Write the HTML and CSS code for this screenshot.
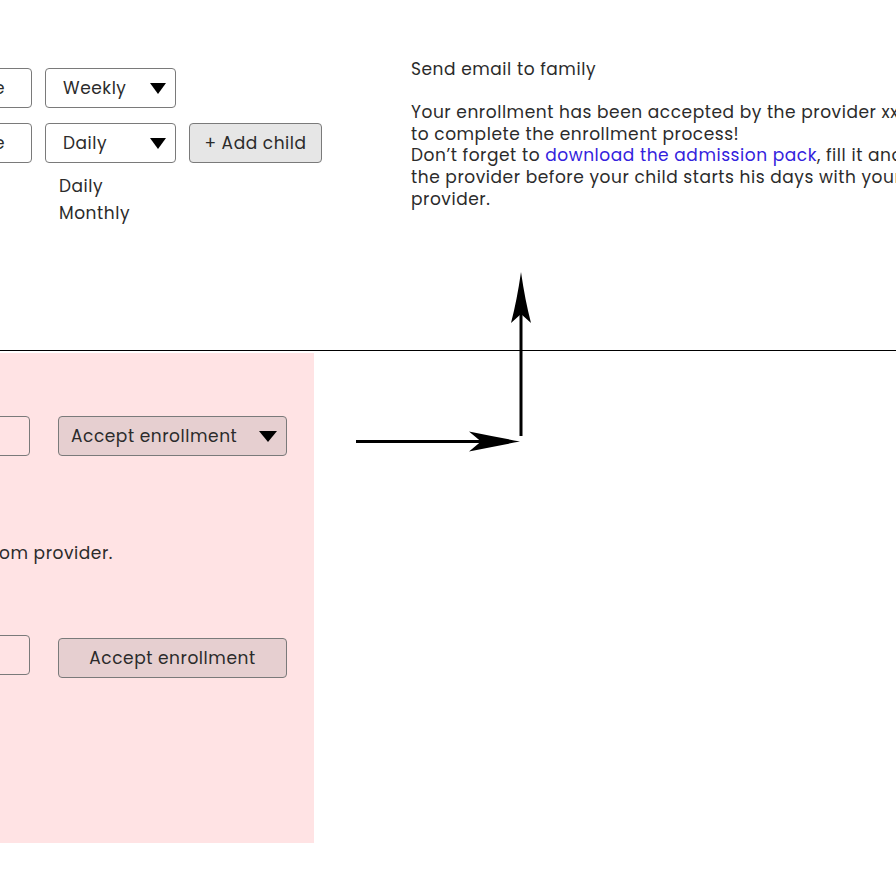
FILE: index.html
```html
<!DOCTYPE html>
<html lang="en">
<head>
<meta charset="utf-8">
<title>Enrollment flow</title>
<link rel="stylesheet" href="styles.css">
</head>
<body>
<div class="page">
  <section class="top">
    <div class="form">
      <div class="row">
        <div class="field input"><span>Name</span></div>
        <div class="field select"><span>Weekly</span><svg class="caret" viewBox="0 0 16 11"><polygon points="0,0 16,0 8,11"/></svg></div>
      </div>
      <div class="row">
        <div class="field input"><span>Name</span></div>
        <div class="select-wrap">
          <div class="field select"><span>Daily</span><svg class="caret" viewBox="0 0 16 11"><polygon points="0,0 16,0 8,11"/></svg></div>
          <ul class="options">
            <li>Daily</li>
            <li>Monthly</li>
          </ul>
        </div>
        <div class="field button">+ Add child</div>
      </div>
    </div>
    <div class="email">
      <p class="email-title">Send email to family</p>
      <p class="email-body">Your enrollment has been accepted by the provider xxx, please follow the steps<br>to complete the enrollment process!<br>Don’t forget to <a href="#">download the admission pack</a>, fill it and send it back to<br>the provider before your child starts his days with your<br>provider.</p>
    </div>
  </section>
  <div class="divider"></div>
  <section class="bottom">
    <div class="panel">
      <div class="prow">
        <div class="field input pinput"></div>
        <div class="field select accept"><span>Accept enrollment</span><svg class="caret big" viewBox="0 0 18 11"><polygon points="0,0 18,0 9,11"/></svg></div>
      </div>
      <p class="note">from provider.</p>
      <div class="prow prow2">
        <div class="field input pinput"></div>
        <div class="field button accept-btn">Accept enrollment</div>
      </div>
    </div>
  </section>
  <svg class="arrows" viewBox="0 0 896 896" width="896" height="896">
    <line x1="356" y1="441.5" x2="485" y2="441.5" stroke="#000" stroke-width="3"/>
    <path d="M520,441.5 Q496,437 469,431.5 L481,441.5 L469,451.5 Q496,446 520,441.5 Z" fill="#000"/>
    <line x1="521" y1="436" x2="521" y2="312" stroke="#000" stroke-width="3"/>
    <path d="M521,272 Q525,300 531,323 L521,314 L511,323 Q517,300 521,272 Z" fill="#000"/>
  </svg>
</div>
</body>
</html>
```
FILE: styles.css
```css
* { box-sizing: border-box; }
html, body { margin: 0; padding: 0; background: #fff; }
body {
  font-family: "Poppins", "Open Sans", sans-serif;
  font-size: 17px;
  letter-spacing: 0.55px;
  color: #2b2b2b;
}
.page {
  position: relative;
  width: 896px;
  height: 896px;
  overflow: hidden;
}
.top {
  height: 350px;
  display: flex;
}
.form {
  margin-left: -118px;
  padding-top: 68px;
  display: flex;
  flex-direction: column;
  gap: 15px;
  width: 529px;
  flex: none;
}
.row {
  display: flex;
  align-items: flex-start;
  gap: 13px;
}
.field {
  height: 40px;
  border: 1px solid #7a7a7a;
  border-radius: 4px;
  display: flex;
  align-items: center;
  background: #fff;
}
.input {
  width: 150px;
  justify-content: flex-end;
  padding-right: 26px;
}
.select {
  width: 131px;
  justify-content: space-between;
  padding: 0 9px 0 17px;
}
.caret { width: 16px; height: 11px; fill: #000; }
.caret.big { width: 18px; height: 11px; }
.select-wrap { display: flex; flex-direction: column; }
.options {
  list-style: none;
  margin: 10px 0 0;
  padding: 0 0 0 14px;
  line-height: 27px;
}
.button {
  width: 133px;
  justify-content: center;
  background: #e6e6e6;
}
.email {
  padding-top: 59px;
  white-space: nowrap;
  line-height: 21.75px;
}
.email p { margin: 0; }
.email-title { margin-bottom: 21px !important; }
.email a { color: #3322dd; text-decoration: none; }
.divider {
  height: 1px;
  background: #000;
}
.bottom {
  padding-top: 2px;
}
.panel {
  width: 314px;
  height: 490px;
  background: #ffe3e4;
  padding-top: 63px;
}
.prow {
  display: flex;
  align-items: flex-start;
  gap: 28px;
  margin-left: -120px;
}
.pinput { background: transparent; }
.accept {
  width: 229px;
  background: #e6cfd0;
  padding: 0 9px 0 12px;
}
.note {
  margin: 85px 0 0 -14px;
  line-height: 24px;
}
.prow2 { margin-top: 70px; }
.accept-btn {
  width: 229px;
  margin: 3px 0 0;
  background: #e6cfd0;
}
.arrows {
  position: absolute;
  left: 0;
  top: 0;
  pointer-events: none;
}
```
